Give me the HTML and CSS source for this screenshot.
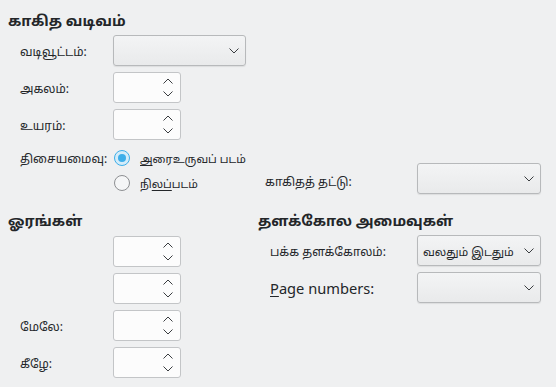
FILE: index.html
```html
<!DOCTYPE html>
<html lang="ta">
<head>
<meta charset="utf-8">
<title>பக்க அமைவு</title>
<link rel="stylesheet" href="styles.css">
</head>
<body>
<main class="page">
  <section class="group">
    <h2 class="group-title">காகித வடிவம்</h2>
    <div class="paper-grid">
      <label class="lbl">வடிவூட்டம்:</label>
      <div class="combo combo-wide"><span class="combo-text"></span><svg class="chev" width="10" height="6" viewBox="0 0 10 6"><polyline points="0.5,0.5 5,5 9.5,0.5"/></svg></div>

      <label class="lbl row2">அகலம்:</label>
      <div class="spin row2"><span class="spin-text"></span><span class="spin-btns"><svg width="10" height="6" viewBox="0 0 10 6"><polyline points="0.5,5.5 5,1 9.5,5.5"/></svg><svg width="10" height="6" viewBox="0 0 10 6"><polyline points="0.5,0.5 5,5 9.5,0.5"/></svg></span></div>

      <label class="lbl row3">உயரம்:</label>
      <div class="spin row3"><span class="spin-text"></span><span class="spin-btns"><svg width="10" height="6" viewBox="0 0 10 6"><polyline points="0.5,5.5 5,1 9.5,5.5"/></svg><svg width="10" height="6" viewBox="0 0 10 6"><polyline points="0.5,0.5 5,5 9.5,0.5"/></svg></span></div>

      <label class="lbl row4 lbl-top">திசையமைவு:</label>
      <div class="radios row4">
        <div class="radio-item"><span class="radio checked"></span><span><u>அ</u>ரைஉருவப் படம்</span></div>
        <div class="radio-item"><span class="radio"></span><span>நி<u>லப்</u>படம்</span></div>
      </div>
      <label class="lbl row4 right-lbl lbl-end">காகிதத் தட்டு:</label>
      <div class="combo row4 right-field field-end"><span class="combo-text"></span><svg class="chev" width="10" height="6" viewBox="0 0 10 6"><polyline points="0.5,0.5 5,5 9.5,0.5"/></svg></div>
    </div>
  </section>

  <div class="bottom">
    <section class="group group-margins">
      <h2 class="group-title">ஓரங்கள்</h2>
      <div class="margin-grid">
        <label class="lbl"></label>
        <div class="spin"><span class="spin-text"></span><span class="spin-btns"><svg width="10" height="6" viewBox="0 0 10 6"><polyline points="0.5,5.5 5,1 9.5,5.5"/></svg><svg width="10" height="6" viewBox="0 0 10 6"><polyline points="0.5,0.5 5,5 9.5,0.5"/></svg></span></div>
        <label class="lbl"></label>
        <div class="spin"><span class="spin-text"></span><span class="spin-btns"><svg width="10" height="6" viewBox="0 0 10 6"><polyline points="0.5,5.5 5,1 9.5,5.5"/></svg><svg width="10" height="6" viewBox="0 0 10 6"><polyline points="0.5,0.5 5,5 9.5,0.5"/></svg></span></div>
        <label class="lbl">மேலே:</label>
        <div class="spin"><span class="spin-text"></span><span class="spin-btns"><svg width="10" height="6" viewBox="0 0 10 6"><polyline points="0.5,5.5 5,1 9.5,5.5"/></svg><svg width="10" height="6" viewBox="0 0 10 6"><polyline points="0.5,0.5 5,5 9.5,0.5"/></svg></span></div>
        <label class="lbl">கீழே:</label>
        <div class="spin"><span class="spin-text"></span><span class="spin-btns"><svg width="10" height="6" viewBox="0 0 10 6"><polyline points="0.5,5.5 5,1 9.5,5.5"/></svg><svg width="10" height="6" viewBox="0 0 10 6"><polyline points="0.5,0.5 5,5 9.5,0.5"/></svg></span></div>
      </div>
    </section>

    <section class="group group-layout">
      <h2 class="group-title">தளக்கோல அமைவுகள்</h2>
      <div class="layout-grid">
        <label class="lbl">பக்க தளக்கோலம்:</label>
        <div class="combo"><span class="combo-text combo-value">வலதும் இடதும்</span><svg class="chev" width="10" height="6" viewBox="0 0 10 6"><polyline points="0.5,0.5 5,5 9.5,0.5"/></svg></div>
        <label class="lbl latin"><u>P</u>age numbers:</label>
        <div class="combo"><span class="combo-text"></span><svg class="chev" width="10" height="6" viewBox="0 0 10 6"><polyline points="0.5,0.5 5,5 9.5,0.5"/></svg></div>
      </div>
    </section>
  </div>
</main>
</body>
</html>
```

FILE: styles.css
```css
* { box-sizing: border-box; }

html, body {
  margin: 0;
  background: #eff0f1;
}

body {
  font-family: "Noto Sans", "Noto Sans Tamil", "DejaVu Sans", sans-serif;
  font-size: 12px;
  color: #232629;
  width: 556px;
  height: 387px;
  overflow: hidden;
}

.page {
  padding: 10px 15px 0 8px;
}

.group-title {
  margin: 0;
  font-size: 14.6px;
  font-weight: bold;
  line-height: 20px;
  height: 20px;
}

.latin {
  font-size: 14.67px;
}

.paper-grid {
  margin-top: 5px;
  padding-left: 12px;
  display: grid;
  grid-template-columns: 93px 133px 19px 152px 124px;
  grid-template-rows: 31px 31px 31px 48px;
  row-gap: 6px;
}

.lbl {
  display: flex;
  align-items: center;
  white-space: nowrap;
  grid-column: 1;
  padding-top: 2px;
}

.row2 { grid-row: 2; }
.row3 { grid-row: 3; }
.row4 { grid-row: 4; }

.paper-grid > .combo-wide { grid-column: 2; grid-row: 1; }
.paper-grid > .spin { grid-column: 2; width: 68px; }
.paper-grid > .radios { grid-column: 2 / span 2; }

.lbl-top {
  align-self: start;
  height: 23px;
}

.right-lbl { grid-column: 4; }
.right-field { grid-column: 5; }

.lbl-end,
.field-end {
  align-self: end;
  height: 31px;
}

.lbl-end { padding-top: 5px; }

.radios {
  display: flex;
  flex-direction: column;
  gap: 2px;
}

.radio-item {
  height: 23px;
  display: flex;
  align-items: center;
  gap: 10px;
  white-space: nowrap;
  padding-left: 1px;
  font-size: 11.2px;
}

.radio-item > span:last-child { padding-top: 2px; }

.radio {
  width: 16px;
  height: 16px;
  border-radius: 50%;
  border: 1px solid #8d8f92;
  background: #f5f6f7;
  flex: none;
  position: relative;
}

.radio.checked {
  border-color: #3daee9;
  background: #d4ecf9;
}

.radio.checked::after {
  content: "";
  position: absolute;
  left: 3px;
  top: 3px;
  width: 8px;
  height: 8px;
  border-radius: 50%;
  background: #3daee9;
}

u {
  text-decoration: underline;
  text-underline-offset: 2px;
}

/* combo box */
.combo {
  height: 31px;
  border: 1px solid #b7b9bb;
  border-radius: 3px;
  background: linear-gradient(#f3f4f5, #e9eaeb);
  box-shadow: 0 1px 1px rgba(0, 0, 0, 0.08);
  display: flex;
  align-items: center;
  padding: 0 6px 0 5px;
  gap: 4px;
}

.combo-text {
  flex: 1;
  white-space: nowrap;
  overflow: hidden;
  padding-top: 2px;
}

.combo-value {
  font-size: 11.3px;
}

.chev,
.spin-btns svg {
  fill: none;
  stroke: #3a3d40;
  stroke-width: 1;
  flex: none;
}

/* spin box */
.spin {
  height: 31px;
  width: 68px;
  border: 1px solid #c3c5c7;
  border-radius: 3px;
  background: #fcfcfc;
  display: flex;
  align-items: center;
  padding: 0 7px 0 6px;
}

.spin-text { flex: 1; }

.spin-btns {
  display: flex;
  flex-direction: column;
  gap: 7px;
}

.spin-btns svg { display: block; }

/* bottom */
.bottom {
  display: flex;
  margin-top: 16px;
}

.group-margins { width: 250px; }
.group-layout { flex: 1; }

.margin-grid {
  margin-top: 6px;
  padding-left: 12px;
  display: grid;
  grid-template-columns: 93px 68px;
  grid-auto-rows: 31px;
  row-gap: 6px;
}

.layout-grid {
  margin-top: 5px;
  padding-left: 12px;
  display: grid;
  grid-template-columns: 147px 124px;
  grid-auto-rows: 31px;
  row-gap: 6px;
}

.margin-grid > .spin,
.layout-grid > .combo { grid-column: 2; }

.layout-grid > .lbl.latin { padding-top: 0; }
```
